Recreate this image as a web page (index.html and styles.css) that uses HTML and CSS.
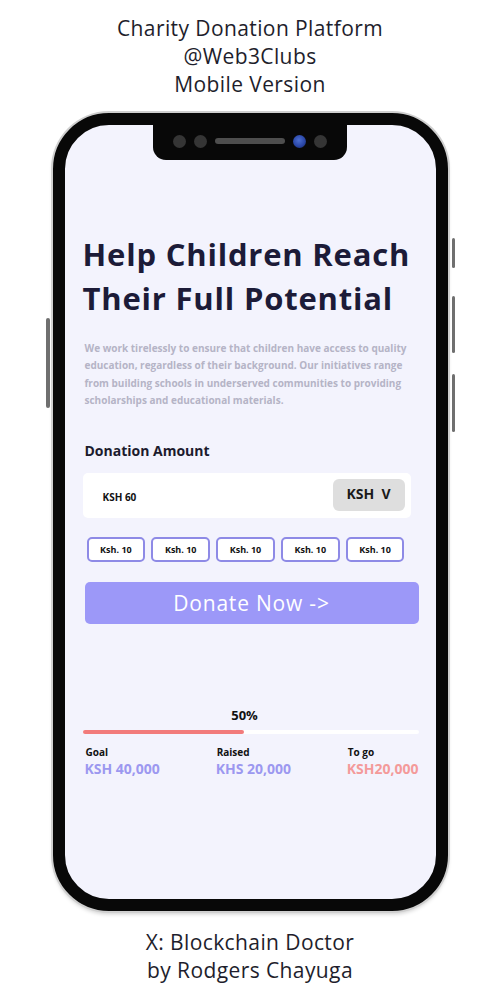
FILE: index.html
```html
<!DOCTYPE html>
<html lang="en">
<head>
  <meta charset="UTF-8" />
  <meta name="viewport" content="width=device-width, initial-scale=1.0"/>
  <title>Charity Donation Platform</title>
  <link rel="stylesheet" href="styles.css">
</head>
<body>
  <header class="caption">
    <p>Charity Donation Platform</p>
    <p>@Web3Clubs</p>
    <p>Mobile Version</p>
  </header>

  <div class="phone">
    <span class="side-btn left-btn"></span>
    <span class="side-btn right-btn btn-1"></span>
    <span class="side-btn right-btn btn-2"></span>
    <span class="side-btn right-btn btn-3"></span>

    <div class="notch">
      <span class="dot"></span>
      <span class="dot"></span>
      <span class="speaker"></span>
      <span class="dot cam"></span>
      <span class="dot"></span>
    </div>

    <main class="content">
      <h1>Help Children Reach Their Full Potential</h1>
      <p class="intro">
        We work tirelessly to ensure that children have access to quality<br>
        education, regardless of their background. Our initiatives range<br>
        from building schools in underserved communities to providing<br>
        scholarships and educational materials.
      </p>

      <h2 class="amount-title">Donation Amount</h2>
      <div class="amount-input">
        <span class="amount-value">KSH 60</span>
        <button type="button" class="currency-btn">KSH&nbsp;&nbsp;V</button>
      </div>

      <div class="chips">
        <button type="button" class="chip">Ksh. 10</button>
        <button type="button" class="chip">Ksh. 10</button>
        <button type="button" class="chip">Ksh. 10</button>
        <button type="button" class="chip">Ksh. 10</button>
        <button type="button" class="chip">Ksh. 10</button>
      </div>

      <button type="button" class="donate-button">Donate Now -&gt;</button>

      <div class="progress">
        <p class="progress-label">50%</p>
        <div class="progress-track">
          <div class="progress-fill" style="width: 48%"></div>
        </div>
      </div>

      <div class="stats">
        <div class="stat">
          <span class="stat-label">Goal</span>
          <span class="stat-value">KSH 40,000</span>
        </div>
        <div class="stat">
          <span class="stat-label">Raised</span>
          <span class="stat-value">KHS 20,000</span>
        </div>
        <div class="stat">
          <span class="stat-label">To go</span>
          <span class="stat-value to-go">KSH20,000</span>
        </div>
      </div>
    </main>
  </div>

  <footer class="caption footer">
    <p>X: Blockchain Doctor</p>
    <p>by Rodgers Chayuga</p>
  </footer>
</body>
</html>
```

FILE: styles.css
```css
body {
  margin: 0;
  padding: 0;
  font-family: 'Open Sans', 'Lato', sans-serif;
  background: #fff;
  color: #1c1b33;
}

.caption {
  text-align: center;
  padding-top: 14px;
}

.caption p {
  margin: 0;
  font-size: 21px;
  line-height: 28px;
  letter-spacing: 0.4px;
  color: #1e1e2c;
}

.footer {
  padding-top: 17px;
}

.phone {
  position: relative;
  box-sizing: border-box;
  width: 395px;
  height: 798px;
  margin: 15px auto 0;
  border: 12px solid #080808;
  border-radius: 56px;
  background: #f3f3fd;
  box-shadow: 0 0 0 2px #cfcfcf, 0 3px 4px rgba(0, 0, 0, 0.2);
}

.side-btn {
  position: absolute;
  background: #6f6f6f;
  border-radius: 2px;
}

.left-btn {
  left: -19px;
  top: 193px;
  width: 4px;
  height: 90px;
}

.right-btn {
  right: -19px;
  width: 3px;
}

.btn-1 {
  top: 113px;
  height: 30px;
}

.btn-2 {
  top: 171px;
  height: 57px;
}

.btn-3 {
  top: 249px;
  height: 58px;
}

.notch {
  width: 194px;
  height: 35px;
  margin: 0 auto;
  background: #080808;
  border-radius: 0 0 13px 13px;
  display: flex;
  justify-content: center;
  align-items: center;
  gap: 8px;
  padding-bottom: 3px;
  box-sizing: border-box;
}

.dot {
  width: 13px;
  height: 13px;
  border-radius: 50%;
  background: #353535;
}

.dot.cam {
  background: radial-gradient(circle at 45% 40%, #4d6fd0 0%, #2a47a8 55%, #16245a 100%);
}

.speaker {
  width: 70px;
  height: 6px;
  border-radius: 3px;
  background: #4e4e4e;
}

.content {
  padding: 72px 17px 0 18px;
}

.content h1 {
  margin: 0;
  font-size: 31px;
  line-height: 44px;
  font-weight: 700;
  letter-spacing: 0.8px;
  color: #1c1b38;
}

.intro {
  margin: 20px 0 0 2px;
  font-size: 10px;
  line-height: 17.4px;
  font-weight: 700;
  color: #b5b4c6;
  white-space: nowrap;
}

.amount-title {
  margin: 31px 0 0 2px;
  font-size: 14px;
  line-height: 20px;
  font-weight: 700;
  color: #1c1b2e;
}

.amount-input {
  margin: 12px 8px 0 0;
  height: 45px;
  background: #fff;
  border-radius: 5px;
  display: flex;
  align-items: center;
  justify-content: space-between;
  padding: 0 6px 0 20px;
}

.amount-value {
  font-size: 10px;
  font-weight: 700;
  color: #111;
  padding-top: 4px;
}

.currency-btn {
  width: 72px;
  height: 32px;
  border: none;
  border-radius: 6px;
  background: #dedede;
  font-family: inherit;
  font-size: 14px;
  font-weight: 700;
  color: #1a1a1a;
  padding-bottom: 4px;
}

.chips {
  display: flex;
  gap: 6px;
  margin: 19px 14px 0 4px;
}

.chip {
  flex: 1;
  height: 25px;
  border: 2px solid #8e8ae6;
  border-radius: 5px;
  background: #fff;
  font-family: inherit;
  font-size: 9px;
  font-weight: 700;
  color: #111;
  padding: 0;
}

.donate-button {
  display: block;
  width: calc(100% - 2px);
  height: 42px;
  margin: 20px 0 0 2px;
  border: none;
  border-radius: 5px;
  background: #9c98f8;
  color: #fff;
  font-family: inherit;
  font-size: 21px;
  letter-spacing: 0.8px;
}

.progress {
  margin-top: 82px;
}

.progress-label {
  margin: 0;
  padding-right: 12px;
  text-align: center;
  font-size: 13px;
  line-height: 18px;
  font-weight: 700;
  color: #111;
}

.progress-track {
  margin-top: 6px;
  height: 4px;
  background: #fff;
  border-radius: 2px;
}

.progress-fill {
  height: 100%;
  background: #f27b7b;
  border-radius: 2px;
}

.stats {
  display: flex;
  justify-content: space-between;
  margin: 12px 0 0 2px;
}

.stat {
  display: flex;
  flex-direction: column;
}

.stat-label {
  font-size: 10px;
  line-height: 13px;
  font-weight: 700;
  color: #111;
  padding-left: 1px;
}

.stat-value {
  font-size: 14px;
  line-height: 19px;
  font-weight: 700;
  color: #9c98f0;
}

.stat-value.to-go {
  color: #f49a9a;
}
```
